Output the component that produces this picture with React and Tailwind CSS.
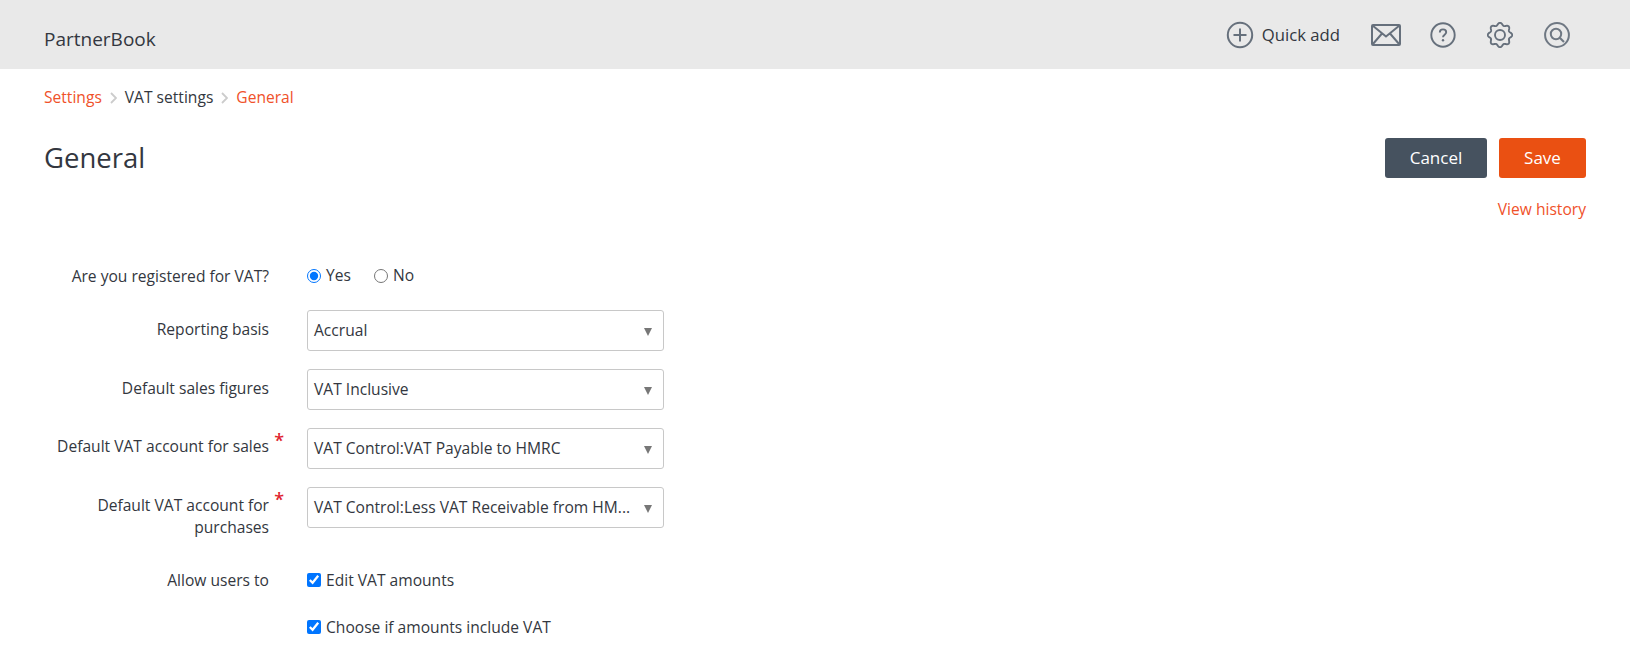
import React from "react";

const gearPath = (() => {
  const pts = [];
  for (let i = 0; i < 160; i++) {
    const a = (i / 160) * Math.PI * 2;
    const r = 11 + 1.25 * Math.cos(8 * a);
    pts.push(`${(13 + r * Math.sin(a)).toFixed(2)} ${(13 - r * Math.cos(a)).toFixed(2)}`);
  }
  return `M${pts.join("L")}Z`;
})();

function PlusIcon() {
  return (
    <svg width="28" height="28" viewBox="0 0 28 28" fill="none" stroke="#66707c" strokeWidth="2">
      <circle cx="14" cy="14" r="12.2" />
      <path d="M14 7.500v13M7.500 14h13" />
    </svg>
  );
}

function MailIcon() {
  return (
    <svg width="30" height="22" viewBox="0 0 30 22" fill="none" stroke="#66707c" strokeWidth="2">
      <rect x="1" y="1" width="28" height="20" rx="1" />
      <path d="M1.500 1.500 15 12.500 28.500 1.500M1.500 20.500 11 9.500M28.500 20.500 19 9.500" />
    </svg>
  );
}

function HelpIcon() {
  return (
    <svg width="26" height="26" viewBox="0 0 26 26" fill="none" stroke="#66707c" strokeWidth="1.9">
      <circle cx="13" cy="13" r="11.7" />
      <path d="M9.800 10.400c0-1.900 1.400-3 3.200-3s3.200 1.100 3.200 2.800c0 2.400-3.200 2.500-3.200 5" strokeWidth="1.900" />
      <circle cx="13" cy="18.200" r="1.200" fill="#66707c" stroke="none" />
    </svg>
  );
}

function GearIcon() {
  return (
    <svg width="26" height="26" viewBox="0 0 26 26" fill="none" stroke="#66707c" strokeWidth="1.9">
      <path d={gearPath} strokeLinejoin="round" />
      <circle cx="13" cy="13" r="5" />
    </svg>
  );
}

function SearchIcon() {
  return (
    <svg width="26" height="26" viewBox="0 0 26 26" fill="none" stroke="#6f7883" strokeWidth="2">
      <circle cx="13" cy="13" r="11.900" />
      <circle cx="12" cy="12" r="5.200" />
      <path d="m16 16 4 4" strokeWidth="2.200" />
    </svg>
  );
}

function Chevron() {
  return (
    <svg width="7" height="12" viewBox="0 0 7 12" fill="none" stroke="#cccccc" strokeWidth="1.800" className="mx-[8px]">
      <path d="m1 1 5 5-5 5" />
    </svg>
  );
}

function SelectBox({ value }) {
  return (
    <div className="flex h-[41px] w-[357px] items-center justify-between rounded-[3px] border border-[#c8c8c8] pl-[6px] pr-[11px] text-[15.6px]">
      <span className="w-[320px] whitespace-nowrap">{value}</span>
      <svg width="8" height="8" viewBox="0 0 8 8" className="mt-[2px]">
        <path d="M0 0h8L4 8z" fill="#777777" />
      </svg>
    </div>
  );
}

function Row({ label, required, className, labelClass = "", children }) {
  return (
    <div className={`flex ${className}`}>
      <div className={`relative w-[269px] shrink-0 text-right text-[15.6px] leading-[22px] ${labelClass}`}>
        {label}
        {required && (
          <span className="absolute right-[-15px] top-[2px] text-[18px] font-semibold leading-[21px] text-[#e0232e]">*</span>
        )}
      </div>
      <div className="ml-[38px]">{children}</div>
    </div>
  );
}

export default function App() {
  return (
    <div className="h-[666px] overflow-hidden bg-white font-['Open_Sans',sans-serif] text-[#333740]">
      <header className="flex h-[69px] items-center justify-between bg-[#e9e9e9] pl-[44px] pr-[60px]">
        <div className="mt-[9px] text-[19px]">PartnerBook</div>
        <div className="flex items-center">
          <div className="flex items-center gap-[8px]">
            <PlusIcon />
            <span className="text-[16.7px]">Quick add</span>
          </div>
          <div className="ml-[31px]"><MailIcon /></div>
          <div className="ml-[29px]"><HelpIcon /></div>
          <div className="ml-[31px]"><GearIcon /></div>
          <div className="ml-[31px]"><SearchIcon /></div>
        </div>
      </header>

      <nav className="ml-[44px] mt-[18px] flex items-center text-[15.6px] leading-[21px]">
        <span className="text-[#f0512a]">Settings</span>
        <Chevron />
        <span>VAT settings</span>
        <Chevron />
        <span className="text-[#f0512a]">General</span>
      </nav>

      <div className="mt-[30px] flex items-start justify-between px-[44px]">
        <h1 className="mt-[2px] text-[27.5px] leading-[36px]">General</h1>
        <div className="flex flex-col items-end">
          <div className="flex gap-[12px]">
            <button className="h-[40px] w-[102px] rounded-[3px] bg-[#46525f] text-[17px] text-white">Cancel</button>
            <button className="h-[40px] w-[87px] rounded-[3px] bg-[#ea5012] text-[17px] text-white">Save</button>
          </div>
          <a className="mt-[21px] text-[15.6px] leading-[21px] text-[#f0512a]">View history</a>
        </div>
      </div>

      <form className="mt-[44px]">
        <Row label="Are you registered for VAT?" className="mb-[23px] h-[23px] items-center">
          <div className="flex items-center text-[15.6px]">
            <input type="radio" name="vat" defaultChecked className="m-0 h-[14px] w-[14px]" />
            <span className="ml-[5px]">Yes</span>
            <input type="radio" name="vat" className="m-0 ml-[23px] h-[14px] w-[14px]" />
            <span className="ml-[5px]">No</span>
          </div>
        </Row>
        <Row label="Reporting basis" labelClass="pt-[8px]" className="mb-[18px] items-start">
          <SelectBox value="Accrual" />
        </Row>
        <Row label="Default sales figures" labelClass="pt-[8px]" className="mb-[18px] items-start">
          <SelectBox value="VAT Inclusive" />
        </Row>
        <Row label="Default VAT account for sales" required labelClass="pt-[7px]" className="mb-[18px] items-start">
          <SelectBox value="VAT Control:VAT Payable to HMRC" />
        </Row>
        <Row label={<>Default VAT account for<br />purchases</>} required labelClass="pt-[7px]" className="mb-[31px] items-start">
          <SelectBox value="VAT Control:Less VAT Receivable from HM..." />
        </Row>
        <Row label="Allow users to" className="mb-[26px] h-[21px] items-center">
          <label className="flex items-center text-[15.6px]">
            <input type="checkbox" defaultChecked className="m-0 h-[14px] w-[14px]" />
            <span className="ml-[5px] mt-[2px]">Edit VAT amounts</span>
          </label>
        </Row>
        <Row label="" className="h-[21px] items-center">
          <label className="flex items-center text-[15.6px]">
            <input type="checkbox" defaultChecked className="m-0 h-[14px] w-[14px]" />
            <span className="ml-[5px] mt-[2px]">Choose if amounts include VAT</span>
          </label>
        </Row>
      </form>
    </div>
  );
}
